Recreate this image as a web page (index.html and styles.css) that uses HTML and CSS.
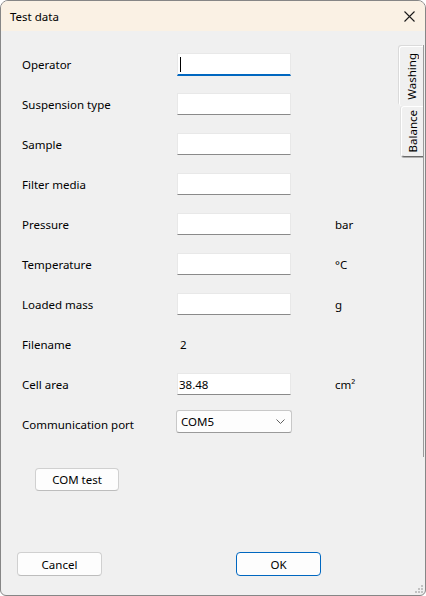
FILE: index.html
```html
<!DOCTYPE html>
<html lang="en">
<head>
  <meta charset="UTF-8" />
  <title>Test data</title>
  <link rel="stylesheet" href="styles.css">
</head>
<body>
  <div class="window">
    <div class="titlebar">
      <span class="title">Test data</span>
      <svg class="close" width="11" height="11" viewBox="0 0 11 11">
        <path d="M0.5 0.5 L10.5 10.5 M10.5 0.5 L0.5 10.5" stroke="#1a1a1a" stroke-width="1.1" fill="none"/>
      </svg>
    </div>

    <div class="main">
      <div class="form">
        <div class="label">Operator</div>
        <div class="textbox focus"><span class="caret"></span></div>
        <div></div>

        <div class="label">Suspension type</div>
        <div class="textbox"></div>
        <div></div>

        <div class="label">Sample</div>
        <div class="textbox"></div>
        <div></div>

        <div class="label">Filter media</div>
        <div class="textbox"></div>
        <div></div>

        <div class="label">Pressure</div>
        <div class="textbox"></div>
        <div class="unit">bar</div>

        <div class="label">Temperature</div>
        <div class="textbox"></div>
        <div class="unit">°C</div>

        <div class="label">Loaded mass</div>
        <div class="textbox"></div>
        <div class="unit">g</div>

        <div class="label">Filename</div>
        <div class="value">2</div>
        <div></div>

        <div class="label">Cell area</div>
        <div class="textbox">38.48</div>
        <div class="unit">cm²</div>

        <div class="label">Communication port</div>
        <div class="combo">
          <span>COM5</span>
          <svg width="9" height="5" viewBox="0 0 9 5">
            <path d="M0.5 0.5 L4.5 4.5 L8.5 0.5" stroke="#606060" stroke-width="1" fill="none"/>
          </svg>
        </div>
        <div></div>
      </div>

      <div class="tabstrip">
        <div class="tab active"><span>Washing</span></div>
        <div class="tab"><span>Balance</span></div>
      </div>
    </div>

    <div class="tools">
      <button class="btn com-btn">COM test</button>
    </div>

    <div class="footer">
      <button class="btn">Cancel</button>
      <button class="btn primary">OK</button>
    </div>

    <!-- size grip -->
    <svg class="grip" width="8" height="8" viewBox="0 0 8 8">
      <rect x="6" y="0" width="2" height="2" fill="#c2c2c2"/>
      <rect x="3" y="3" width="2" height="2" fill="#c2c2c2"/>
      <rect x="6" y="3" width="2" height="2" fill="#c2c2c2"/>
      <rect x="0" y="6" width="2" height="2" fill="#c2c2c2"/>
      <rect x="3" y="6" width="2" height="2" fill="#c2c2c2"/>
      <rect x="6" y="6" width="2" height="2" fill="#c2c2c2"/>
    </svg>
  </div>
</body>
</html>
```

FILE: styles.css
```css
body {
  margin: 0;
  background: #ffffff;
  font-family: "Noto Sans", "Open Sans", sans-serif;
  font-size: 11.5px;
  color: #000;
}
.window {
  position: relative;
  width: 426px;
  height: 596px;
  box-sizing: border-box;
  border: 1px solid #868686;
  border-radius: 8px 8px 6px 6px;
  background: #f0f0f0;
  display: flex;
  flex-direction: column;
  overflow: hidden;
}
.titlebar {
  height: 30px;
  flex-shrink: 0;
  background: #faf1e4;
  display: flex;
  align-items: center;
  justify-content: space-between;
  padding: 0 10px 0 9px;
}
.close {
  margin-top: 1px;
}

/* form + vertical tabs */
.main {
  display: flex;
}
.form {
  flex: 1;
  display: grid;
  grid-template-columns: 155px 114px auto;
  grid-auto-rows: 22px;
  row-gap: 18px;
  align-items: center;
  align-content: start;
  padding: 22px 0 0 21px;
}
.textbox {
  height: 22px;
  box-sizing: border-box;
  background: #fff;
  border: 1px solid #e8e8e8;
  border-bottom-color: #8a8a8a;
  padding-left: 1px;
  display: flex;
  align-items: center;
}
.textbox.focus {
  height: 23px;
  align-self: start;
  border-bottom: 2px solid #0067c0;
}
.caret {
  width: 1px;
  height: 15px;
  margin-left: 1px;
  margin-top: 1px;
  background: #000;
}
.value {
  padding-left: 3px;
}
.unit {
  margin-left: 44px;
}
.combo {
  align-self: start;
  margin: -3px 0 0 -1px;
  width: 116px;
  height: 23px;
  box-sizing: border-box;
  background: #fdfdfd;
  border: 1px solid #c8c8c8;
  border-bottom-color: #9a9a9a;
  border-radius: 3px;
  display: flex;
  align-items: center;
  justify-content: space-between;
  padding: 0 6px 0 4px;
}

.tabstrip {
  width: 25px;
  height: 412px;
  box-sizing: border-box;
  margin: 14px 1px 0 0;
  padding-top: 1px;
  border-right: 1px solid #9a9a9a;
  display: flex;
  flex-direction: column;
  align-items: flex-end;
}
.tab {
  width: 22px;
  height: 51px;
  box-sizing: border-box;
  background: #f0f0f0;
  border-left: 1px solid #fff;
  border-top: 1px solid #fff;
  border-bottom: 1px solid #6a6a6a;
  border-radius: 3px 0 0 3px;
  box-shadow: -1px 0 0 #e0e0e0, 0 1px 0 #b0b0b0;
  display: flex;
  align-items: center;
  justify-content: center;
}
.tab.active {
  width: 24px;
  height: 60px;
  border-bottom: none;
  box-shadow: -1px -1px 0 #dadada;
}
.tab span {
  writing-mode: vertical-rl;
  transform: rotate(180deg);
}

/* buttons */
.tools {
  padding: 11px 0 0 34px;
}
.btn {
  font-family: inherit;
  font-size: 11.5px;
  color: #000;
  width: 85px;
  height: 24px;
  padding: 0;
  background: #fdfdfd;
  border: 1px solid #d0d0d0;
  border-bottom-color: #bdbdbd;
  border-radius: 4px;
}
.com-btn {
  width: 84px;
  height: 23px;
}
.btn.primary {
  border: 1px solid #0067c0;
}
.footer {
  margin-top: auto;
  display: flex;
  gap: 134px;
  padding: 0 0 19px 16px;
}
.grip {
  position: absolute;
  right: 2px;
  bottom: 2px;
}
```
